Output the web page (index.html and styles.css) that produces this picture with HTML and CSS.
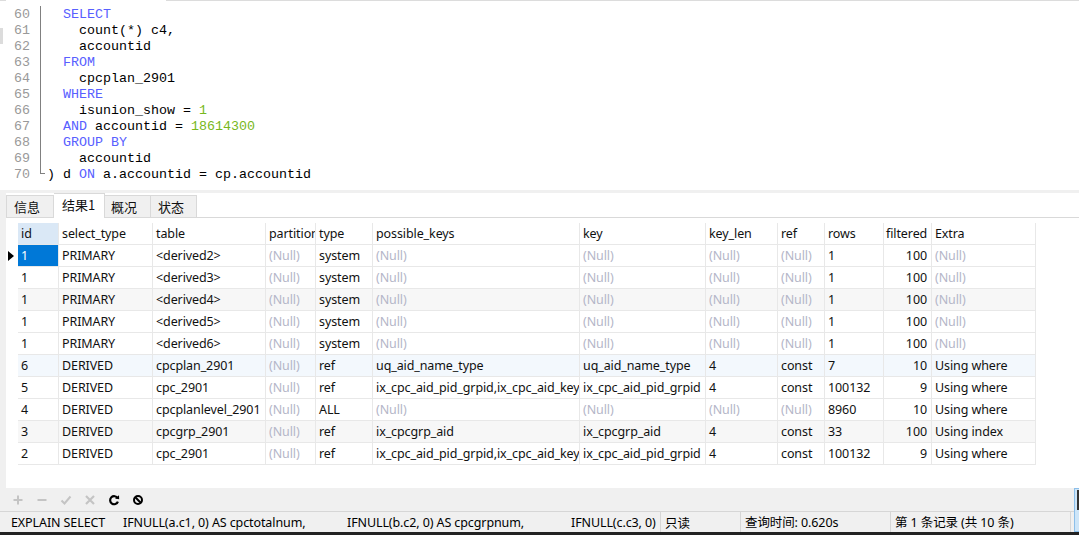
FILE: index.html
```html
<!DOCTYPE html>
<html>
<head>
<meta charset="utf-8">
<link rel="stylesheet" href="styles.css">
</head>
<body>
<div class="app">
  <div class="topline"><div class="tl-gray tl-a"></div><div class="tl-white"></div><div class="tl-gray tl-b"></div></div>
  <div class="editor">
    <div class="edge"><div class="edge-thumb"></div></div>
    <div class="nums">
      <div>60</div><div>61</div><div>62</div><div>63</div><div>64</div><div>65</div><div>66</div><div>67</div><div>68</div><div>69</div><div>70</div>
    </div>
    <div class="foldcol"><div class="foldline"></div></div>
    <div class="code">
      <div class="ln">  <span class="kw">SELECT</span></div>
      <div class="ln">    count(*) c4,</div>
      <div class="ln">    accountid</div>
      <div class="ln">  <span class="kw">FROM</span></div>
      <div class="ln">    cpcplan_2901</div>
      <div class="ln">  <span class="kw">WHERE</span></div>
      <div class="ln">    isunion_show = <span class="num">1</span></div>
      <div class="ln">  <span class="kw">AND</span> accountid = <span class="num">18614300</span></div>
      <div class="ln">  <span class="kw">GROUP BY</span></div>
      <div class="ln">    accountid</div>
      <div class="ln">) d <span class="kw">ON</span> a.accountid = cp.accountid</div>
    </div>
  </div>
  <div class="splitter"></div>
  <div class="lower">
    <div class="tabbar">
      <div class="tab t1">信息</div>
      <div class="tab active t2">结果1</div>
      <div class="tab t3">概况</div>
      <div class="tab t4">状态</div>
    </div>
    <div class="gridarea">
      <div class="indicator">
        <div class="ind-head"></div>
        <div class="ind-row"><div class="tri"></div></div>
      </div>
      <div class="grid">
        <div class="row head">
          <div class="c c1 sel-head">id</div><div class="c c2">select_type</div><div class="c c3">table</div><div class="c c4">partitions</div><div class="c c5">type</div><div class="c c6">possible_keys</div><div class="c c7">key</div><div class="c c8">key_len</div><div class="c c9">ref</div><div class="c c10">rows</div><div class="c c11">filtered</div><div class="c c12">Extra</div>
        </div>
        <div class="row">
          <div class="c c1 sel">1</div><div class="c c2">PRIMARY</div><div class="c c3">&lt;derived2&gt;</div><div class="c c4 nl">(Null)</div><div class="c c5">system</div><div class="c c6 nl">(Null)</div><div class="c c7 nl">(Null)</div><div class="c c8 nl">(Null)</div><div class="c c9 nl">(Null)</div><div class="c c10">1</div><div class="c c11">100</div><div class="c c12 nl">(Null)</div>
        </div>
        <div class="row">
          <div class="c c1">1</div><div class="c c2">PRIMARY</div><div class="c c3">&lt;derived3&gt;</div><div class="c c4 nl">(Null)</div><div class="c c5">system</div><div class="c c6 nl">(Null)</div><div class="c c7 nl">(Null)</div><div class="c c8 nl">(Null)</div><div class="c c9 nl">(Null)</div><div class="c c10">1</div><div class="c c11">100</div><div class="c c12 nl">(Null)</div>
        </div>
        <div class="row alt">
          <div class="c c1">1</div><div class="c c2">PRIMARY</div><div class="c c3">&lt;derived4&gt;</div><div class="c c4 nl">(Null)</div><div class="c c5">system</div><div class="c c6 nl">(Null)</div><div class="c c7 nl">(Null)</div><div class="c c8 nl">(Null)</div><div class="c c9 nl">(Null)</div><div class="c c10">1</div><div class="c c11">100</div><div class="c c12 nl">(Null)</div>
        </div>
        <div class="row">
          <div class="c c1">1</div><div class="c c2">PRIMARY</div><div class="c c3">&lt;derived5&gt;</div><div class="c c4 nl">(Null)</div><div class="c c5">system</div><div class="c c6 nl">(Null)</div><div class="c c7 nl">(Null)</div><div class="c c8 nl">(Null)</div><div class="c c9 nl">(Null)</div><div class="c c10">1</div><div class="c c11">100</div><div class="c c12 nl">(Null)</div>
        </div>
        <div class="row">
          <div class="c c1">1</div><div class="c c2">PRIMARY</div><div class="c c3">&lt;derived6&gt;</div><div class="c c4 nl">(Null)</div><div class="c c5">system</div><div class="c c6 nl">(Null)</div><div class="c c7 nl">(Null)</div><div class="c c8 nl">(Null)</div><div class="c c9 nl">(Null)</div><div class="c c10">1</div><div class="c c11">100</div><div class="c c12 nl">(Null)</div>
        </div>
        <div class="row blue">
          <div class="c c1">6</div><div class="c c2">DERIVED</div><div class="c c3">cpcplan_2901</div><div class="c c4 nl">(Null)</div><div class="c c5">ref</div><div class="c c6">uq_aid_name_type</div><div class="c c7">uq_aid_name_type</div><div class="c c8">4</div><div class="c c9">const</div><div class="c c10">7</div><div class="c c11">10</div><div class="c c12">Using where</div>
        </div>
        <div class="row">
          <div class="c c1">5</div><div class="c c2">DERIVED</div><div class="c c3">cpc_2901</div><div class="c c4 nl">(Null)</div><div class="c c5">ref</div><div class="c c6">ix_cpc_aid_pid_grpid,ix_cpc_aid_key</div><div class="c c7">ix_cpc_aid_pid_grpid</div><div class="c c8">4</div><div class="c c9">const</div><div class="c c10">100132</div><div class="c c11">9</div><div class="c c12">Using where</div>
        </div>
        <div class="row">
          <div class="c c1">4</div><div class="c c2">DERIVED</div><div class="c c3">cpcplanlevel_2901</div><div class="c c4 nl">(Null)</div><div class="c c5">ALL</div><div class="c c6 nl">(Null)</div><div class="c c7 nl">(Null)</div><div class="c c8 nl">(Null)</div><div class="c c9 nl">(Null)</div><div class="c c10">8960</div><div class="c c11">10</div><div class="c c12">Using where</div>
        </div>
        <div class="row alt">
          <div class="c c1">3</div><div class="c c2">DERIVED</div><div class="c c3">cpcgrp_2901</div><div class="c c4 nl">(Null)</div><div class="c c5">ref</div><div class="c c6">ix_cpcgrp_aid</div><div class="c c7">ix_cpcgrp_aid</div><div class="c c8">4</div><div class="c c9">const</div><div class="c c10">33</div><div class="c c11">100</div><div class="c c12">Using index</div>
        </div>
        <div class="row">
          <div class="c c1">2</div><div class="c c2">DERIVED</div><div class="c c3">cpc_2901</div><div class="c c4 nl">(Null)</div><div class="c c5">ref</div><div class="c c6">ix_cpc_aid_pid_grpid,ix_cpc_aid_key</div><div class="c c7">ix_cpc_aid_pid_grpid</div><div class="c c8">4</div><div class="c c9">const</div><div class="c c10">100132</div><div class="c c11">9</div><div class="c c12">Using where</div>
        </div>
      </div>
    </div>
  </div>
  <div class="bottom">
    <div class="bottom-main">
      <div class="toolbar">
        <svg class="ic" width="12" height="12" viewBox="0 0 12 12"><path d="M6 1.5V10.5M1.5 6H10.5" stroke="#c4c4c4" stroke-width="2"/></svg>
        <svg class="ic" width="12" height="12" viewBox="0 0 12 12"><path d="M1.5 6H10.5" stroke="#c4c4c4" stroke-width="2"/></svg>
        <svg class="ic" width="12" height="12" viewBox="0 0 12 12"><path d="M1.5 6.5L4.5 9.5L10.5 2.5" stroke="#c4c4c4" stroke-width="2" fill="none"/></svg>
        <svg class="ic" width="12" height="12" viewBox="0 0 12 12"><path d="M2 2L10 10M10 2L2 10" stroke="#c4c4c4" stroke-width="2.2"/></svg>
        <svg class="ic" width="12" height="12" viewBox="0 0 12 12"><path d="M9.6 4.2A4 4 0 1 0 9.9 7.6" stroke="#000" stroke-width="2.2" fill="none"/><path d="M7 4.6L11.2 5.2L11 1.2Z" fill="#000"/></svg>
        <svg class="ic" width="12" height="12" viewBox="0 0 12 12"><circle cx="6" cy="6" r="4" stroke="#000" stroke-width="2" fill="none"/><path d="M3.3 3.3L8.7 8.7" stroke="#000" stroke-width="2"/></svg>
      </div>
      <div class="statusbar">
        <div class="sb s1"><span class="q q1">EXPLAIN SELECT</span><span class="q q2">IFNULL(a.c1, 0) AS cpctotalnum,</span><span class="q q3">IFNULL(b.c2, 0) AS cpcgrpnum,</span><span class="q">IFNULL(c.c3, 0)</span></div>
        <div class="sb s2">只读</div>
        <div class="sb s3">查询时间: 0.620s</div>
        <div class="sb s4">第 1 条记录 (共 10 条)</div>
        <div class="sb s5"></div>
      </div>
    </div>
    <div class="bottom-right"><div class="br-mark"></div></div>
  </div>
  <div class="darkline"></div>
</div>
</body>
</html>
```

FILE: styles.css
```css
html, body {
  margin: 0;
  padding: 0;
}
body {
  width: 1079px;
  height: 535px;
  overflow: hidden;
  background: #fff;
  font-family: "Noto Sans", "Noto Sans CJK SC", sans-serif;
  font-size: 12.5px;
  letter-spacing: -0.1px;
  color: #111;
}
.app {
  display: flex;
  flex-direction: column;
  width: 1079px;
  height: 535px;
}

/* top line */
.topline {
  display: flex;
  height: 1px;
}
.tl-gray { background: #dcdcdc; }
.tl-a { width: 6px; }
.tl-white { width: 160px; background: #fff; }
.tl-b { flex: 1; }

/* editor */
.editor {
  display: flex;
  height: 189px;
  padding-top: 6px;
  box-sizing: border-box;
  font-family: "Liberation Mono", monospace;
  font-size: 13.33px;
  letter-spacing: 0;
  line-height: 16px;
}
.edge {
  width: 6px;
}
.edge-thumb {
  margin-top: 21px;
  width: 3px;
  height: 16px;
  background: #dcdcdc;
}
.nums {
  width: 24px;
  text-align: right;
  color: #999;
}
.foldcol {
  width: 17px;
}
.foldline {
  margin-left: 10px;
  margin-top: -1px;
  width: 5px;
  height: 168px;
  border-left: 1px solid #808080;
  border-bottom: 1px solid #808080;
  box-sizing: border-box;
}
.code {
  color: #000;
}
.ln {
  white-space: pre;
  height: 16px;
}
.kw { color: #5860ff; }
.num { color: #78b81c; }

.splitter {
  height: 3px;
  background: #f0f0f0;
}

/* lower area */
.lower {
  display: flex;
  flex-direction: column;
  height: 295px;
  border-left: 6px solid #f0f0f0;
  box-sizing: border-box;
}
.tabbar {
  display: flex;
  height: 25px;
  border-bottom: 1px solid #d9d9d9;
  box-sizing: border-box;
  font-family: "Noto Sans CJK SC", sans-serif;
  font-size: 13px;
  letter-spacing: 0;
}
.tab {
  box-sizing: border-box;
  margin-top: 2px;
  height: 22px;
  line-height: 21px;
  padding-left: 7px;
  background: #f0f0f0;
  border: 1px solid #d9d9d9;
  border-bottom: none;
  color: #111;
}
.t1 { width: 48px; }
.t2 { width: 51px; }
.t3 { width: 46px; border-left: none; padding-left: 6px; }
.t4 { width: 46px; border-left: none; padding-left: 7px; }
.tab.active {
  margin-top: 0;
  height: 25px;
  line-height: 22px;
  background: #fff;
  border-left: none;
  padding-left: 8px;
}

.gridarea {
  display: flex;
  flex: 1;
  padding-top: 5px;
  background: #fff;
}
.indicator {
  width: 12px;
}
.ind-head { height: 22px; }
.ind-row {
  height: 22px;
  display: flex;
  align-items: center;
}
.tri {
  margin-left: 2px;
  width: 0;
  height: 0;
  border-left: 6px solid #000;
  border-top: 5px solid transparent;
  border-bottom: 5px solid transparent;
}
.grid {
  width: 1018px;
}
.row {
  display: flex;
  height: 22px;
  box-sizing: border-box;
  border-bottom: 1px solid #e8e8e8;
}
.row.alt { background: #f7f7f7; }
.row.blue { background: #f3f8fd; }
.c {
  box-sizing: border-box;
  border-right: 1px solid #e8e8e8;
  padding-left: 3px;
  line-height: 21px;
  white-space: nowrap;
  overflow: hidden;
  color: #111;
}
.c1 { width: 41px; }
.c2 { width: 94px; }
.c3 { width: 113px; }
.c4 { width: 50px; }
.c5 { width: 57px; }
.c6 { width: 207px; }
.c7 { width: 126px; }
.c8 { width: 72px; }
.c9 { width: 47px; }
.c10 { width: 59px; }
.c11 { width: 48px; text-align: right; padding-right: 4px; }
.c12 { width: 104px; }
.head .c11 { text-align: left; padding-left: 2px; padding-right: 0; }
.nl { color: #b4b6c8; }
.sel-head { background: #dae8f6; }
.sel { background: #0078d7; color: #fff; }

/* bottom */
.bottom {
  display: flex;
  height: 44px;
  background: #f0f0f0;
}
.bottom-main {
  flex: 1;
  display: flex;
  flex-direction: column;
}
.toolbar {
  display: flex;
  align-items: center;
  height: 23px;
  padding-left: 12px;
  gap: 12px;
}
.ic { display: block; }
.statusbar {
  display: flex;
  height: 21px;
  border-top: 1px solid #d6d6d6;
  box-sizing: border-box;
  line-height: 22px;
}
.sb {
  box-sizing: border-box;
  border-right: 1px solid #d6d6d6;
  white-space: nowrap;
  overflow: hidden;
  color: #000;
}
.s1 { width: 661px; padding-left: 11px; }
.s2 { width: 80px; padding-left: 4px; font-family: "Noto Sans CJK SC", sans-serif; }
.s3 { width: 150px; padding-left: 4px; }
.s4 { width: 180px; padding-left: 4px; }
.s5 { width: 3px; border-right: none; }
.q { display: inline-block; }
.q1 { width: 112px; }
.q2 { width: 224px; }
.q3 { width: 224px; }
.bottom-right {
  width: 5px;
  background: #cde5f8;
  border: 1px solid #8cbfea;
  border-right: none;
  box-sizing: border-box;
}
.br-mark {
  margin-top: 1px;
  margin-left: 2px;
  width: 2px;
  height: 20px;
  background: #333;
}
.darkline {
  height: 3px;
  background: #222;
}
```
